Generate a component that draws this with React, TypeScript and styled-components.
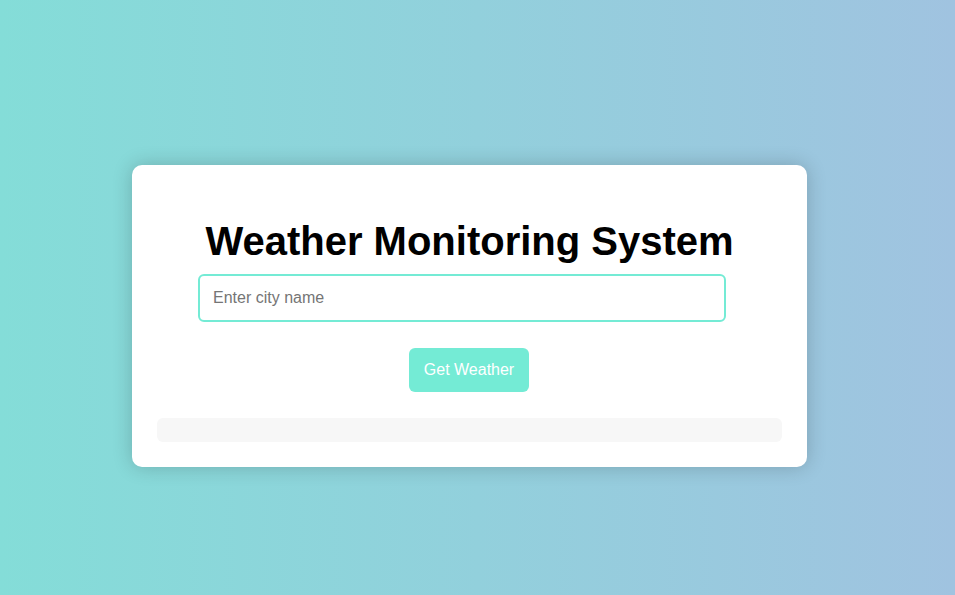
import React from "react";
import styled, { createGlobalStyle } from "styled-components";

const GlobalStyle = createGlobalStyle`
  html, body {
    margin: 0;
    padding: 0;
    height: 100%;
  }
  body {
    font-family: "Liberation Sans", Arial, sans-serif;
    background: linear-gradient(to right, #84ddd8, #a0c3e0);
    min-height: 595px;
  }
`;

const Page = styled.div`
  height: 595px;
  display: flex;
  align-items: center;
  justify-content: center;
`;

const Card = styled.div`
  box-sizing: border-box;
  width: 675px;
  margin-left: -16px;
  margin-top: 37px;
  padding: 25px;
  background: #ffffff;
  border-radius: 10px;
  box-shadow: 0 0 20px rgba(0, 0, 0, 0.2);
  display: flex;
  flex-direction: column;
  align-items: center;
`;

const Title = styled.h1`
  margin: 29px 0 10px;
  font-size: 40px;
  font-weight: bold;
  color: #000;
  text-align: center;
`;

const CityInput = styled.input`
  box-sizing: border-box;
  width: 528px;
  height: 48px;
  padding: 0 13px;
  border: 2px solid #74ebd5;
  border-radius: 6px;
  margin-right: 15px;
  font-family: "Liberation Sans", Arial, sans-serif;
  font-size: 16px;
  outline: none;
  &::placeholder {
    color: #757575;
  }
`;

const Button = styled.button`
  margin-top: 26px;
  margin-right: 1px;
  width: 120px;
  height: 44px;
  border: none;
  border-radius: 6px;
  background: #74ebd5;
  color: #ffffff;
  font-family: "Liberation Sans", Arial, sans-serif;
  font-size: 16px;
  cursor: pointer;
`;

const Result = styled.div`
  align-self: stretch;
  margin-top: 26px;
  height: 24px;
  background: #f7f7f7;
  border-radius: 6px;
`;

export default function App() {
  return (
    <>
      <GlobalStyle />
      <Page>
        <Card>
          <Title>Weather Monitoring System</Title>
          <CityInput type="text" placeholder="Enter city name" />
          <Button>Get Weather</Button>
          <Result />
        </Card>
      </Page>
    </>
  );
}
